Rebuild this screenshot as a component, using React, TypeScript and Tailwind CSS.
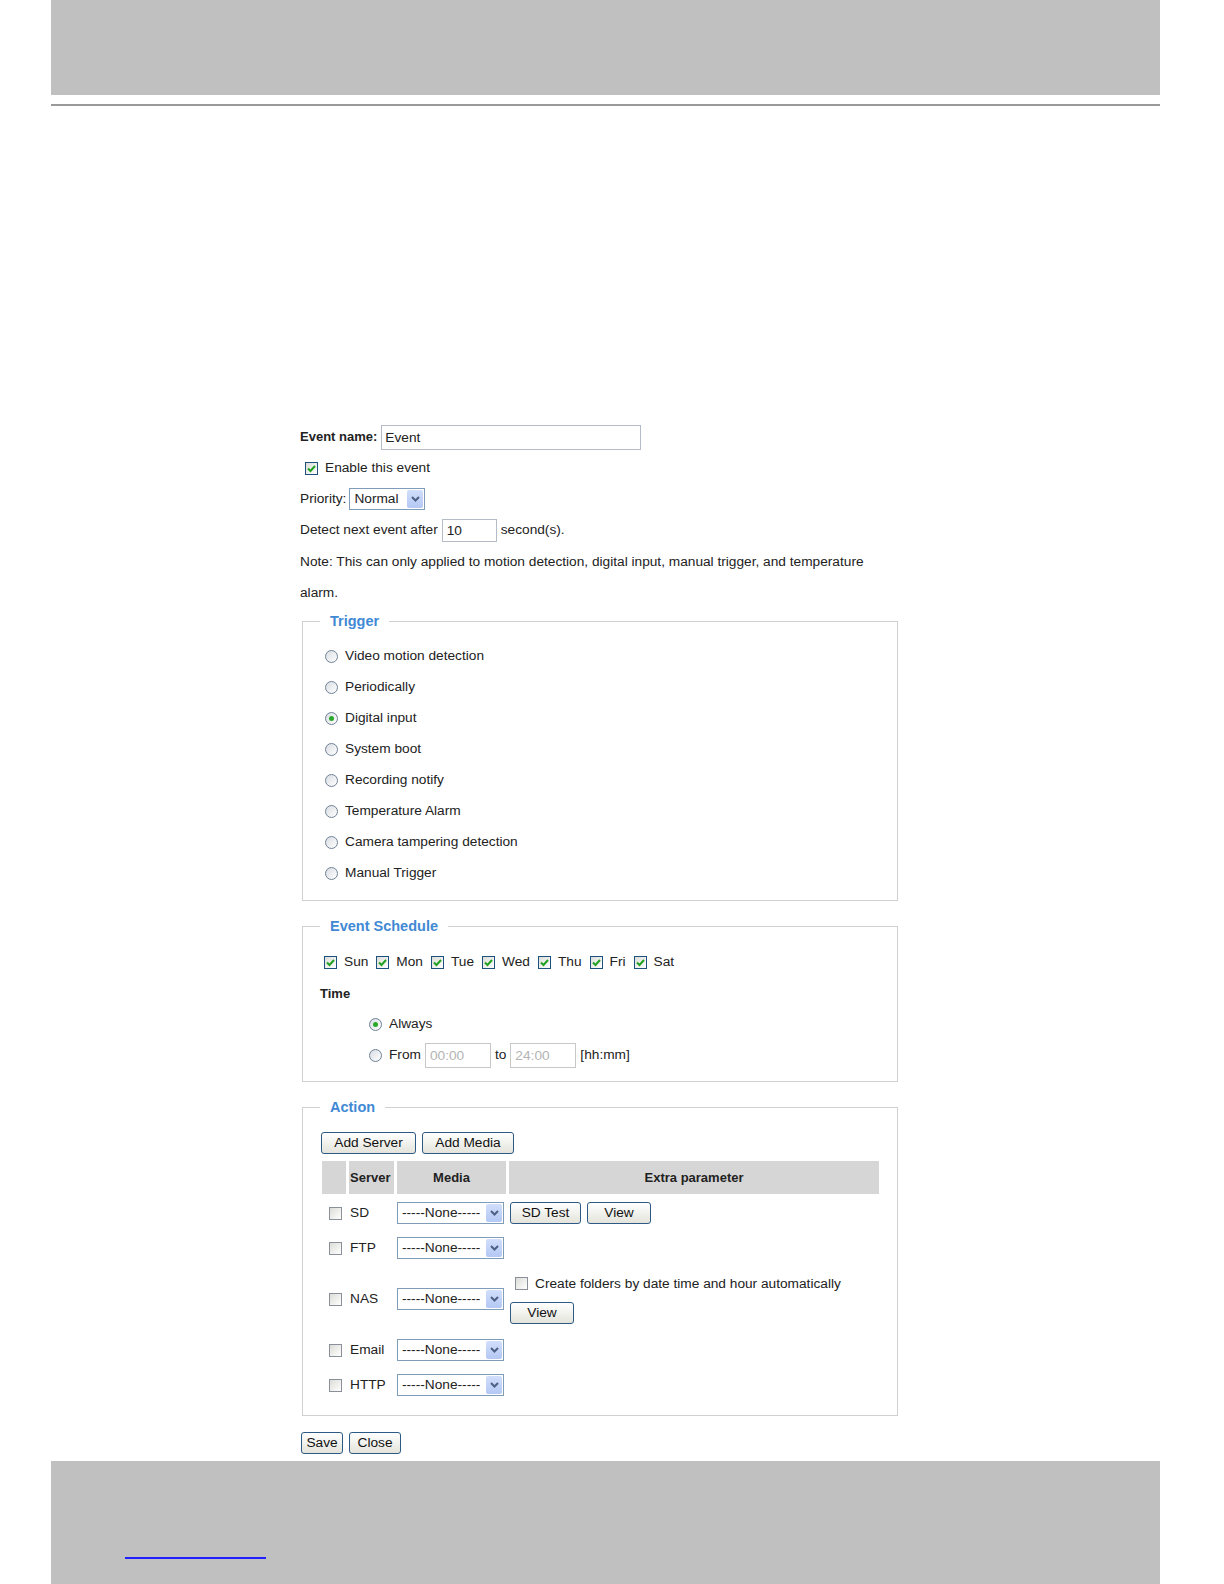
import type { ReactNode } from "react";

function Check({ on }: { on?: boolean }) {
  return (
    <span
      className={
        on
          ? "inline-flex h-[13px] w-[13px] shrink-0 items-center justify-center border border-[#1c5180] bg-gradient-to-br from-[#dcdcd7] to-white"
          : "inline-flex h-[13px] w-[13px] shrink-0 items-center justify-center border border-[#8a9099] bg-gradient-to-br from-[#dcdcd7] to-white"
      }
    >
      {on ? (
        <svg width="11" height="11" viewBox="0 0 11 11">
          <path d="M2 5.5 L4.5 8 L9 3" fill="none" stroke="#21a121" strokeWidth="2" />
        </svg>
      ) : null}
    </span>
  );
}

function Radio({ on }: { on?: boolean }) {
  return (
    <span className="inline-flex h-[13px] w-[13px] shrink-0 items-center justify-center rounded-full border border-[#6f8196] bg-gradient-to-br from-[#d9dde2] to-white">
      {on ? <span className="h-[5px] w-[5px] rounded-full bg-[#2aa82a]" /> : null}
    </span>
  );
}

function Select({ value, className }: { value: string; className: string }) {
  return (
    <span
      className={`inline-flex h-[22px] items-center justify-between border border-[#7f9db9] bg-white pl-[4px] pr-[1px] ${className}`}
    >
      <span className="leading-none">{value}</span>
      <span className="flex h-[18px] w-[16px] items-center justify-center rounded-[2px] bg-gradient-to-b from-[#d2defb] to-[#b4c8f4]">
        <svg width="11" height="8" viewBox="0 0 11 8">
          <path d="M2 2 L5.5 5.5 L9 2" fill="none" stroke="#4d6185" strokeWidth="2" />
        </svg>
      </span>
    </span>
  );
}

function Btn({ children, className }: { children: ReactNode; className: string }) {
  return (
    <button
      type="button"
      className={`h-[22px] rounded-[3px] border border-[#2c5a84] bg-gradient-to-b from-white to-[#e4e4dc] text-center text-[13.7px] leading-none text-[#111] ${className}`}
    >
      {children}
    </button>
  );
}

function Legend({ children }: { children: ReactNode }) {
  return (
    <legend className="ml-[17px] h-[20px] px-[10px] text-[14.5px] leading-[20px] font-bold text-[#4189d4]">
      {children}
    </legend>
  );
}

const TRIGGERS = [
  "Video motion detection",
  "Periodically",
  "Digital input",
  "System boot",
  "Recording notify",
  "Temperature Alarm",
  "Camera tampering detection",
  "Manual Trigger",
];

const DAYS = ["Sun", "Mon", "Tue", "Wed", "Thu", "Fri", "Sat"];

const SERVERS = ["SD", "FTP", "NAS", "Email", "HTTP"];

export default function App() {
  return (
    <div className="flex h-[1584px] w-[1224px] flex-col overflow-hidden bg-white font-['Liberation_Sans',Arial,sans-serif] text-[13.7px] text-[#222]">
      <div className="ml-[51px] h-[95px] w-[1109px] shrink-0 bg-[#c0c0c0]" />
      <div className="ml-[51px] mt-[9px] h-[2px] w-[1109px] shrink-0 bg-[#999]" />

      <main className="ml-[300px] mt-[315.5px] w-[598px] flex-1">
        <div className="flex h-[31px] items-center gap-[4px]">
          <span className="text-[13px] font-bold">Event name:</span>
          <input
            className="h-[25px] w-[260px] border border-[#b5bcc7] px-[3px] outline-none"
            defaultValue="Event"
          />
        </div>
        <div className="flex h-[31px] items-center gap-[7px] pl-[5px]">
          <Check on />
          <span>Enable this event</span>
        </div>
        <div className="flex h-[31px] items-center gap-[3px]">
          <span>Priority:</span>
          <Select value="Normal" className="w-[76px]" />
        </div>
        <div className="flex h-[31px] items-center gap-[4px]">
          <span>Detect next event after</span>
          <input
            className="h-[23px] w-[55px] border border-[#b5bcc7] px-[4px] outline-none"
            defaultValue="10"
          />
          <span>second(s).</span>
        </div>
        <p className="whitespace-nowrap leading-[31px]">
          Note: This can only applied to motion detection, digital input, manual trigger, and temperature
          <br />
          alarm.
        </p>

        <fieldset className="ml-[2px] mt-[3.5px] w-[596px] border border-[#d0d0d0]">
          <Legend>Trigger</Legend>
          <div className="pb-[11px] pl-[22px] pt-[10px]">
            {TRIGGERS.map((t) => (
              <div key={t} className="flex h-[31px] items-center gap-[7px]">
                <Radio on={t === "Digital input"} />
                <span>{t}</span>
              </div>
            ))}
          </div>
        </fieldset>

        <fieldset className="ml-[2px] mt-[15px] w-[596px] border border-[#d0d0d0]">
          <Legend>Event Schedule</Legend>
          <div className="pb-[11px] pl-[21px] pt-[11px]">
            <div className="flex h-[31px] items-center gap-x-[8px]">
              {DAYS.map((d) => (
                <span key={d} className="flex items-center gap-[7px]">
                  <Check on />
                  <span>{d}</span>
                </span>
              ))}
            </div>
            <div className="flex h-[31px] items-center">
              <span className="-ml-[4px] text-[13px] font-bold">Time</span>
            </div>
            <div className="flex h-[31px] items-center gap-[7px] pl-[45px]">
              <Radio on />
              <span>Always</span>
            </div>
            <div className="flex h-[30px] items-center gap-[4px] pl-[45px]">
              <Radio />
              <span className="ml-[3px]">From</span>
              <input
                disabled
                className="h-[25px] w-[66px] border border-[#c8c8c8] bg-white px-[4px] text-[#b4b4b4]"
                defaultValue="00:00"
              />
              <span>to</span>
              <input
                disabled
                className="h-[25px] w-[66px] border border-[#c8c8c8] bg-white px-[4px] text-[#b4b4b4]"
                defaultValue="24:00"
              />
              <span>[hh:mm]</span>
            </div>
          </div>
        </fieldset>

        <fieldset className="ml-[2px] mt-[15px] w-[596px] border border-[#d0d0d0]">
          <Legend>Action</Legend>
          <div className="pb-[14px] pl-[18px] pt-[15px]">
            <div className="flex gap-[6px]">
              <Btn className="w-[95px]">Add Server</Btn>
              <Btn className="w-[92px]">Add Media</Btn>
            </div>
            <div className="ml-[1px] mt-[7px] grid w-[557px] grid-cols-[24px_45px_109px_370px] gap-[3px]">
              <div className="h-[33px] bg-[#d6d6d6]" />
              <div className="flex h-[33px] items-center bg-[#d6d6d6] pl-[1px] text-[13px] font-bold">Server</div>
              <div className="flex h-[33px] items-center justify-center bg-[#d6d6d6] text-[13px] font-bold">Media</div>
              <div className="flex h-[33px] items-center justify-center bg-[#d6d6d6] text-[13px] font-bold">
                Extra parameter
              </div>
              {SERVERS.map((s) => {
                const tall = s === "NAS";
                return [
                  <div
                    key={`${s}-c`}
                    className={
                      tall
                        ? "flex h-[64px] items-center justify-center pl-[2px]"
                        : "flex h-[32px] items-center justify-center pl-[2px]"
                    }
                  >
                    <Check />
                  </div>,
                  <div key={`${s}-n`} className="flex items-center pl-[1px]">
                    {s}
                  </div>,
                  <div key={`${s}-m`} className="flex items-center">
                    <Select value="-----None-----" className="w-[107px]" />
                  </div>,
                  <div key={`${s}-x`} className="flex flex-col justify-center pl-[1px]">
                    {s === "SD" ? (
                      <div className="flex gap-[6px]">
                        <Btn className="w-[71px]">SD Test</Btn>
                        <Btn className="w-[64px]">View</Btn>
                      </div>
                    ) : null}
                    {tall ? (
                      <div className="flex flex-col gap-[8px]">
                        <div className="flex items-center gap-[7px] pl-[5px]">
                          <Check />
                          <span>Create folders by date time and hour automatically</span>
                        </div>
                        <Btn className="w-[64px]">View</Btn>
                      </div>
                    ) : null}
                  </div>,
                ];
              })}
            </div>
          </div>
        </fieldset>

        <div className="ml-[1px] mt-[16px] flex gap-[6px]">
          <Btn className="h-[21px] w-[42px]">Save</Btn>
          <Btn className="h-[21px] w-[52px]">Close</Btn>
        </div>
      </main>

      <footer className="ml-[51px] h-[123px] w-[1109px] shrink-0 bg-[#c0c0c0] pt-[96px]">
        <div className="ml-[74px] h-[2px] w-[141px] bg-[#1f1fff]" />
      </footer>
    </div>
  );
}
